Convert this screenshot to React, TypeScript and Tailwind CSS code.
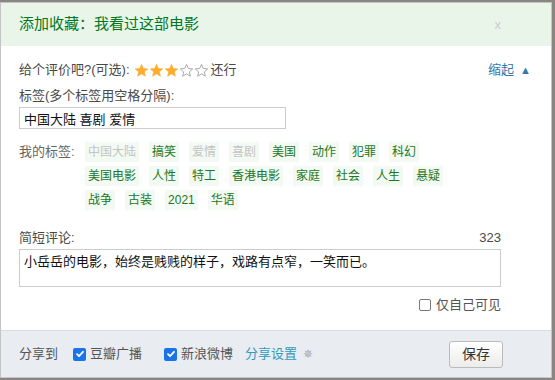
import React from "react";

const FONT = { fontFamily: '"Liberation Sans", Arial, "Noto Sans CJK SC", sans-serif' };

function Star({ filled }: { filled: boolean }) {
  return (
    <svg width="15" height="15" viewBox="0 0 24 24" className="block">
      <path
        d="M12 2.2l2.9 6.6 7.1.6-5.4 4.7 1.6 7-6.2-3.8-6.2 3.8 1.6-7L2 9.4l7.1-.6z"
        fill={filled ? "#ffac2d" : "none"}
        stroke={filled ? "#ffac2d" : "#aaa"}
        strokeWidth={filled ? 1 : 1.6}
        strokeLinejoin="round"
      />
    </svg>
  );
}

const tags: { t: string; off?: boolean }[] = [
  { t: "中国大陆", off: true },
  { t: "搞笑" },
  { t: "爱情", off: true },
  { t: "喜剧", off: true },
  { t: "美国" },
  { t: "动作" },
  { t: "犯罪" },
  { t: "科幻" },
  { t: "美国电影" },
  { t: "人性" },
  { t: "特工" },
  { t: "香港电影" },
  { t: "家庭" },
  { t: "社会" },
  { t: "人生" },
  { t: "悬疑" },
  { t: "战争" },
  { t: "古装" },
  { t: "2021" },
  { t: "华语" },
];

function Check() {
  return (
    <span className="inline-flex items-center justify-center w-[13px] h-[13px] rounded-[2px] bg-[#1a73e8]">
      <svg width="10" height="10" viewBox="0 0 10 10">
        <path d="M2 5.2l2 2L8 2.8" fill="none" stroke="#fff" strokeWidth="1.8" strokeLinecap="round" strokeLinejoin="round" />
      </svg>
    </span>
  );
}

export default function App() {
  return (
    <div className="w-[555px] h-[380px] bg-[#8a8580] pt-[2px] overflow-hidden" style={FONT}>
      <div className="w-[552px] h-[376px] bg-white border border-[#c4c4c4] flex flex-col text-[13px] text-[#494949]">
        <div className="h-[43px] bg-[#eaf5ea] flex items-center justify-between pl-[18px] pr-[50px] shrink-0">
          <span className="text-[15px] text-[#007722]">添加收藏：我看过这部电影</span>
          <span className="text-[13px] text-[#cccccc]">x</span>
        </div>

        <div className="flex-1 pl-[18px] pr-[50px] pt-[14px]">
          <div className="flex items-center h-[20px] justify-between mr-[-30px]">
            <div className="flex items-center">
              <span>给个评价吧?(可选):</span>
              <span className="flex ml-[4px]">
                <Star filled />
                <Star filled />
                <Star filled />
                <Star filled={false} />
                <Star filled={false} />
              </span>
              <span className="ml-[2px]">还行</span>
            </div>
            <span className="text-[#3377aa] flex items-center gap-[6px]">
              缩起<span className="text-[11px]">▲</span>
            </span>
          </div>

          <div className="mt-[6px] h-[20px] leading-[20px]">标签(多个标签用空格分隔):</div>
          <input
            className="mt-[1px] w-[267px] h-[22px] border border-[#cccccc] px-[4px] text-[13px] text-[#111] outline-none block"
            defaultValue="中国大陆 喜剧 爱情"
            style={FONT}
          />

          <div className="flex mt-[13px]">
            <span className="w-[66px] shrink-0 leading-[20px] text-[#666]">我的标签:</span>
            <div className="flex flex-wrap w-[375px] gap-x-[10px] gap-y-[4px]">
              {tags.map((x) => (
                <span
                  key={x.t}
                  className={
                    "h-[20px] leading-[20px] px-[3px] text-[12px] bg-[#f3faf3] " +
                    (x.off ? "text-[#c4c4c4]" : "text-[#227722]")
                  }
                >
                  {x.t}
                </span>
              ))}
            </div>
          </div>

          <div className="flex justify-between mt-[18px] h-[20px] leading-[20px]">
            <span>简短评论:</span>
            <span>323</span>
          </div>
          <div className="mt-[1px] h-[38px] border border-[#cccccc] px-[4px] pt-[2px] text-[13px] text-[#111] leading-[20px]">
            小岳岳的电影，始终是贱贱的样子，戏路有点窄，一笑而已。
          </div>
          <div className="flex justify-end items-center mt-[8px] h-[20px] gap-[5px]">
            <span className="w-[12px] h-[12px] border border-[#777] rounded-[2px] bg-white" />
            <span className="text-[#555]">仅自己可见</span>
          </div>
        </div>

        <div className="h-[47px] bg-[#e9edf1] border-t border-[#d6dce2] flex items-center pl-[18px] pr-[48px] shrink-0">
          <span className="text-[#555]">分享到</span>
          <span className="ml-[15px] flex items-center gap-[4px]">
            <Check />
            <span className="text-[#555]">豆瓣广播</span>
          </span>
          <span className="ml-[22px] flex items-center gap-[4px]">
            <Check />
            <span className="text-[#555]">新浪微博</span>
          </span>
          <span className="ml-[12px] text-[#3399bb]">分享设置</span>
          <span className="ml-[6px] text-[#aaa] text-[12px]">✵</span>
          <button
            className="ml-auto w-[54px] h-[27px] rounded-[3px] border border-[#bbbbbb] bg-gradient-to-b from-[#ffffff] to-[#ececec] text-[14px] text-[#333]"
            style={FONT}
          >
            保存
          </button>
        </div>
      </div>
    </div>
  );
}
